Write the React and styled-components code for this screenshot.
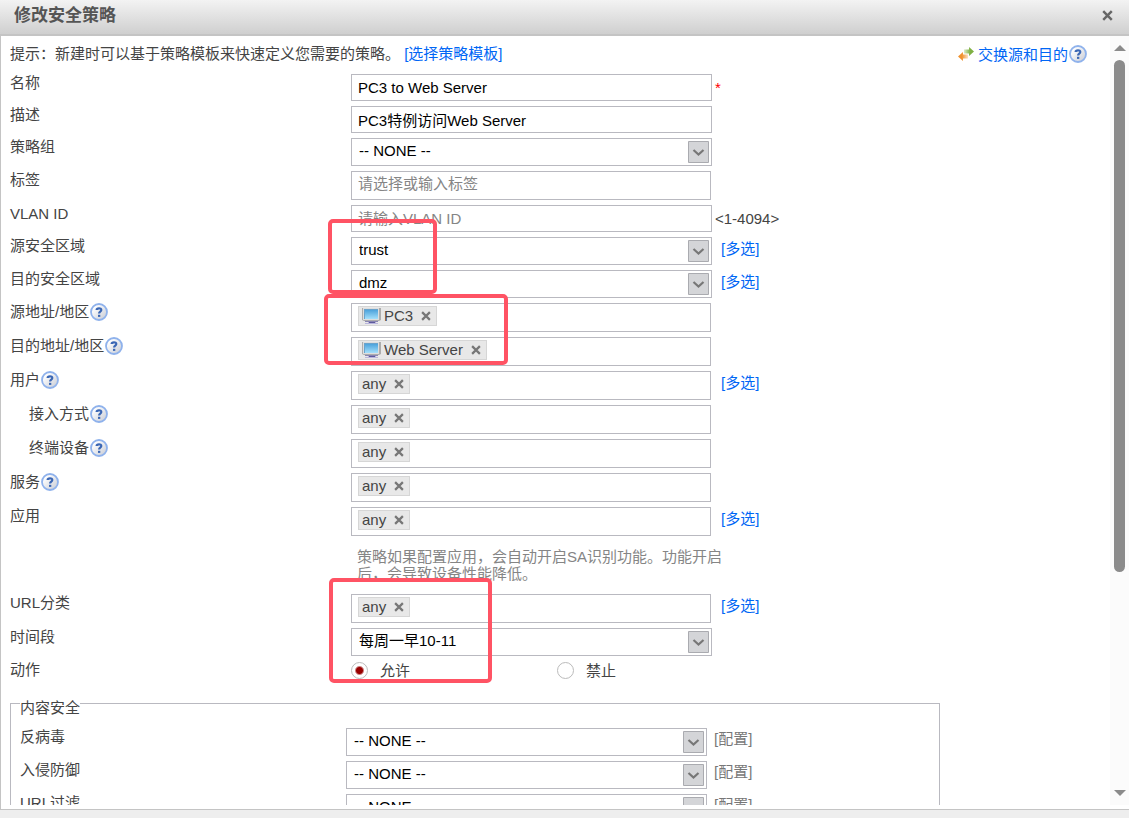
import React from 'react'
import styled, { createGlobalStyle } from 'styled-components'

const GlobalStyle = createGlobalStyle`
    * {
        box-sizing: border-box;
    }
    body {
        margin: 0;
        background: #eee;
        color: #444;
        font: 15px/17px "Liberation Sans", "Noto Sans CJK SC", sans-serif;
    }
    input, select, button {
        font: inherit;
    }
`

const Dialog = styled.div`
    display: flex;
    flex-direction: column;
    height: 100vh;
    padding-bottom: 8px;
    background: #eee;
`

const Header = styled.header`
    display: flex;
    justify-content: space-between;
    align-items: center;
    height: 36px;
    flex-shrink: 0;
    padding: 0 16px 4px 14px;
    border-bottom: 2px solid #c4c4c4;
    background: linear-gradient(#f3f3f3, #cfcfcf);
`

const Title = styled.h1`
    margin: 0;
    padding-top: 2px;
    font-size: 17px;
    line-height: 24px;
    font-weight: bold;
    color: #555;
`

const IconButton = styled.button`
    display: flex;
    padding: 0;
    border: none;
    background: transparent;
    cursor: pointer;
`

const Body = styled.div`
    display: flex;
    flex: 1;
    min-height: 0;
    padding-bottom: 4px;
    border-left: 1px solid #c4c4c4;
    border-bottom: 1px solid #c4c4c4;
    background: #fff;
`

const Content = styled.form`
    position: relative;
    flex: 1;
    overflow: hidden;
    padding: 9px 23px 0 9px;
`

const ScrollBar = styled.div`
    display: flex;
    flex-direction: column;
    align-items: center;
    justify-content: space-between;
    width: 19px;
    padding: 8px 0;
    background: #fbfbfb;
`

const Track = styled.div`
    flex: 1;
    width: 11px;
    margin: 9px 0;
`

const Thumb = styled.div`
    height: 71%;
    border-radius: 6px;
    background: #8b8b8b;
`

const Tip = styled.div`
    display: flex;
    justify-content: space-between;
    height: 29px;
`

const TipText = styled.p`
    margin: 0;
`

const Link = styled.a`
    color: #0066f5;
    text-decoration: none;
`

const Swap = styled.div`
    display: flex;
    align-items: center;
    gap: 4px;
    height: 18px;
`

const WithHelp = styled.span`
    display: flex;
    align-items: center;
    gap: 1px;
`

const Row = styled.div`
    display: grid;
    grid-template-columns: ${p => p.$inner ? 326 : 341}px 361px auto;
    justify-content: start;
    align-items: start;
    margin-bottom: 5px;
`

const Label = styled.label`
    display: flex;
    align-items: center;
    gap: 1px;
    height: 17px;
    padding-left: ${p => p.$indent ? 19 : 0}px;
`

const TextBox = styled.input`
    width: 100%;
    height: 27px;
    padding: 0 6px;
    border: 1px solid #b9b9c0;
    border-radius: 0;
    outline: none;
    background: #fff;
    color: #000;
    &::placeholder {
        color: #858585;
        opacity: 1;
    }
`

const TagInput = styled(TextBox)`
    width: 360px;
    height: 29px;
    padding-bottom: 4px;
`

const SelectBox = styled.div`
    display: grid;
    align-items: center;
    height: 28px;
    select, svg {
        grid-area: 1 / 1;
    }
    svg {
        justify-self: end;
        margin-right: 3px;
        pointer-events: none;
    }
`

const StyledSelect = styled.select`
    appearance: none;
    width: 100%;
    height: 28px;
    padding: 0 28px 3px 7px;
    border: 1px solid #b9b9c0;
    border-radius: 0;
    outline: none;
    background: #fff;
    color: #000;
`

const TokenBox = styled.div`
    display: flex;
    align-items: flex-start;
    width: 360px;
    height: 29px;
    padding: 2px 6px;
    border: 1px solid #b9b9c0;
`

const Token = styled.span`
    display: flex;
    align-items: center;
    height: 20px;
    padding: 0 5px 1px 3px;
    border: 1px solid #d6d6d6;
    background: #e8e8e8;
    svg:first-child {
        margin-right: 2px;
    }
    button {
        margin-left: 8px;
    }
    button svg:first-child {
        margin: 0;
    }
`

const Side = styled.span`
    padding: ${p => p.$near ? '5px 3px' : '3px 9px'};
    color: ${p => p.$required ? '#f00' : 'inherit'};
`

const ConfigLink = styled.span`
    padding: 2px 7px;
    color: #777;
`

const Hint = styled.p`
    width: 375px;
    margin: 12px 0 12px 347px;
    color: #858585;
`

const Radios = styled.div`
    display: flex;
`

const RadioLabel = styled.label`
    display: flex;
    flex-shrink: 0;
    align-items: center;
    gap: 12px;
    width: 206px;
    height: 18px;
`

const Radio = styled.input`
    appearance: none;
    width: 17px;
    height: 17px;
    margin: 0;
    border: 1px solid #bbb;
    border-radius: 50%;
    background: #fff;
    &:checked {
        background: radial-gradient(circle, #900 0 3px, #fff 5px);
    }
`

const Fieldset = styled.fieldset`
    max-width: 930px;
    min-width: 0;
    margin: 12px 0 0;
    padding: 12px 9px 0;
    border: 1px solid #b9b9c0;
`

const Legend = styled.legend`
    padding: 8px 0 0;
`

const Mark = styled.div`
    position: absolute;
    left: ${p => p.$x}px;
    top: ${p => p.$y}px;
    width: ${p => p.$w}px;
    height: ${p => p.$h}px;
    border: 4px solid #ff5364;
    border-radius: 5px;
    pointer-events: none;
`

const CrossIcon = ({ size = 10, color = '#777' }) => (
    <svg width={size} height={size} viewBox="0 0 9 9">
        <path d="M1 1l7 7M8 1l-7 7" stroke={color} strokeWidth="2" />
    </svg>
)

const HelpIcon = () => (
    <svg width="18" height="18" viewBox="0 0 18 18">
        <defs>
            <linearGradient id="help" x1="0" y1="0" x2="1" y2="1">
                <stop offset="0.2" stopColor="#fff" />
                <stop offset="1" stopColor="#c4c8d2" />
            </linearGradient>
        </defs>
        <circle cx="9" cy="9" r="8" fill="url(#help)" stroke="#8fb2ec" strokeWidth="1.8" />
        <path d="M6.6 7C6.7 4.7 11.4 4.7 11.3 7c0 1.6-2.2 1.5-2.2 3.4" fill="none" stroke="#3a66b4" strokeWidth="2.2" />
        <path d="M8 11.8h2.3v2.1H8z" fill="#3a66b4" />
    </svg>
)

const SwapIcon = () => (
    <svg width="16" height="16" viewBox="0 0 16 16">
        <defs>
            <linearGradient id="swap-to" x1="0" y1="0" x2="1" y2="0">
                <stop offset="0" stopColor="#dcebc8" />
                <stop offset="0.6" stopColor="#7fb043" />
            </linearGradient>
            <linearGradient id="swap-back" x1="0" y1="0" x2="1" y2="0">
                <stop offset="0.4" stopColor="#f0922e" />
                <stop offset="1" stopColor="#fbe2c4" />
            </linearGradient>
        </defs>
        <path d="M6 3.500h5V1l5 4.500-5 4.500V7.500H6z" fill="url(#swap-to)" />
        <path d="M10 12.500H5V15l-5-4.500L5 6v2.500h5z" fill="url(#swap-back)" />
    </svg>
)

const ComputerIcon = () => (
    <svg width="20" height="16" viewBox="0 0 20 16">
        <defs>
            <linearGradient id="screen" x1="0" y1="0" x2="0" y2="1">
                <stop offset="0" stopColor="#4da3dc" />
                <stop offset="1" stopColor="#a5e0fb" />
            </linearGradient>
        </defs>
        <path d="M0 0h19v12l-2 1H2l-2-1z" fill="#adadad" />
        <path d="M1 0h16v12H1z" fill="#dedede" />
        <path d="M2 1h14v10H2z" fill="#6aa3cc" />
        <path d="M3 2h13v9H3z" fill="url(#screen)" />
        <path d="M3 13h13v1H3z" fill="#8985b4" />
        <path d="M6 14h8v1h2v1H3v-1h3z" fill="#b9b5dc" />
        <path d="M7 14h6v1H7z" fill="#5d5a9c" />
    </svg>
)

const DropIcon = () => (
    <svg width="21" height="22" viewBox="0 0 21 22">
        <path d="M.5.5h20v21H.5z" fill="#d4d5d8" stroke="#aaabb0" />
        <path d="M5.5 9l5 4.500 5-4.500" fill="none" stroke="#777" strokeWidth="2.2" />
    </svg>
)

const Arrow = ({ down }) => (
    <svg width="12" height="7" viewBox="0 0 12 7">
        <path d={down ? 'M0 0h12L6 6z' : 'M0 7h12L6 1z'} fill="#8b8b8b" />
    </svg>
)

const Select = ({ id, value }) => (
    <SelectBox>
        <StyledSelect id={id} defaultValue={value}>
            <option>{value}</option>
        </StyledSelect>
        <DropIcon />
    </SelectBox>
)

const Tokens = ({ id, value, computer }) => (
    <TokenBox>
        <Token>
            {computer && <ComputerIcon />}
            {value}
            <IconButton id={id} type="button" aria-label={`删除 ${value}`}><CrossIcon /></IconButton>
        </Token>
    </TokenBox>
)

const MultiLink = () => <Side><Link href="#">[多选]</Link></Side>

const Field = ({ label, id, help, indent, inner, side, children }) => (
    <Row $inner={inner}>
        <Label htmlFor={id} $indent={indent}>
            {label}
            {help && <HelpIcon />}
        </Label>
        {children}
        {side}
    </Row>
)

const profiles = [
    { id: 'av', label: '反病毒' },
    { id: 'ips', label: '入侵防御' },
    { id: 'url-filter', label: 'URL过滤' },
]

const App = () => {
    return (
        <Dialog>
            <GlobalStyle />
            <Header>
                <Title>修改安全策略</Title>
                <IconButton type="button" aria-label="关闭"><CrossIcon size={11} color="#666" /></IconButton>
            </Header>
            <Body>
                <Content>
                    <Tip>
                        <TipText>
                            提示：新建时可以基于策略模板来快速定义您需要的策略。 <Link href="#">[选择策略模板]</Link>
                        </TipText>
                        <Swap>
                            <SwapIcon />
                            <WithHelp><Link href="#">交换源和目的</Link><HelpIcon /></WithHelp>
                        </Swap>
                    </Tip>
                    <Field label="名称" id="name" side={<Side $near $required>*</Side>}>
                        <TextBox id="name" type="text" defaultValue="PC3 to Web Server" />
                    </Field>
                    <Field label="描述" id="desc">
                        <TextBox id="desc" type="text" defaultValue="PC3特例访问Web Server" />
                    </Field>
                    <Field label="策略组" id="group">
                        <Select id="group" value="-- NONE --" />
                    </Field>
                    <Field label="标签" id="tag">
                        <TagInput id="tag" type="text" placeholder="请选择或输入标签" />
                    </Field>
                    <Field label="VLAN ID" id="vlan" side={<Side $near>&lt;1-4094&gt;</Side>}>
                        <TextBox id="vlan" type="text" placeholder="请输入VLAN ID" />
                    </Field>
                    <Field label="源安全区域" id="src-zone" side={<MultiLink />}>
                        <Select id="src-zone" value="trust" />
                    </Field>
                    <Field label="目的安全区域" id="dst-zone" side={<MultiLink />}>
                        <Select id="dst-zone" value="dmz" />
                    </Field>
                    <Field label="源地址/地区" id="src-addr" help>
                        <Tokens id="src-addr" value="PC3" computer />
                    </Field>
                    <Field label="目的地址/地区" id="dst-addr" help>
                        <Tokens id="dst-addr" value="Web Server" computer />
                    </Field>
                    <Field label="用户" id="user" help side={<MultiLink />}>
                        <Tokens id="user" value="any" />
                    </Field>
                    <Field label="接入方式" id="access" help indent>
                        <Tokens id="access" value="any" />
                    </Field>
                    <Field label="终端设备" id="device" help indent>
                        <Tokens id="device" value="any" />
                    </Field>
                    <Field label="服务" id="service" help>
                        <Tokens id="service" value="any" />
                    </Field>
                    <Field label="应用" id="application" side={<MultiLink />}>
                        <Tokens id="application" value="any" />
                    </Field>
                    <Hint>策略如果配置应用，会自动开启SA识别功能。功能开启后，会导致设备性能降低。</Hint>
                    <Field label="URL分类" id="url-type" side={<MultiLink />}>
                        <Tokens id="url-type" value="any" />
                    </Field>
                    <Field label="时间段" id="time">
                        <Select id="time" value="每周一早10-11" />
                    </Field>
                    <Field label="动作" id="permit">
                        <Radios>
                            <RadioLabel><Radio id="permit" type="radio" name="action" defaultChecked />允许</RadioLabel>
                            <RadioLabel><Radio type="radio" name="action" />禁止</RadioLabel>
                        </Radios>
                    </Field>
                    <Fieldset>
                        <Legend>内容安全</Legend>
                        {profiles.map(p => (
                            <Field key={p.id} label={p.label} id={p.id} inner side={<ConfigLink>[配置]</ConfigLink>}>
                                <Select id={p.id} value="-- NONE --" />
                            </Field>
                        ))}
                    </Fieldset>
                    <Mark $x={327} $y={183} $w={109} $h={75} />
                    <Mark $x={323} $y={258} $w={184} $h={71} />
                    <Mark $x={328} $y={542} $w={163} $h={105} />
                </Content>
                <ScrollBar>
                    <Arrow />
                    <Track><Thumb /></Track>
                    <Arrow down />
                </ScrollBar>
            </Body>
        </Dialog>
    )
}

export default App
